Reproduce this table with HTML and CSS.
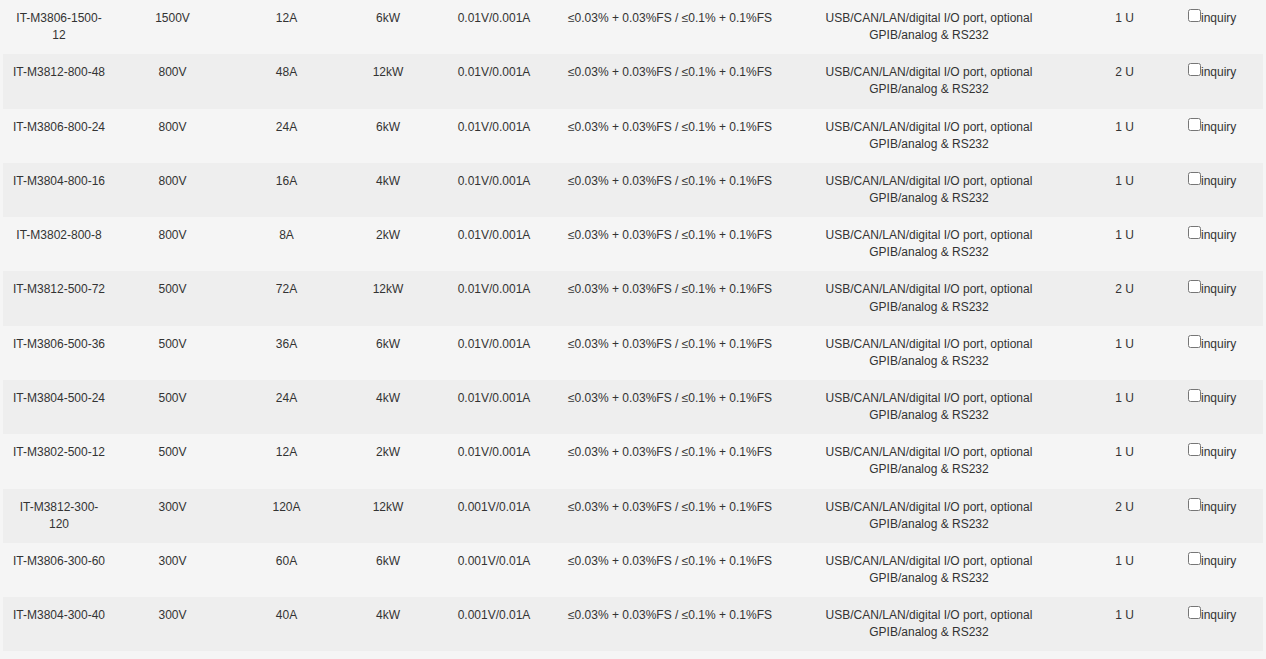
FILE: index.html
```html
<!DOCTYPE html>
<html>
<head>
<meta charset="utf-8">
<link rel="stylesheet" href="styles.css">
</head>
<body>
<table class="spec">
<colgroup>
<col class="c1"><col class="c2"><col class="c3"><col class="c4"><col class="c5"><col class="c6"><col class="c7"><col class="c8"><col class="c9">
</colgroup>
<tbody>
<tr><td>IT-M3806-1500-12</td><td>1500V</td><td>12A</td><td>6kW</td><td>0.01V/0.001A</td><td>≤0.03% + 0.03%FS / ≤0.1% + 0.1%FS</td><td>USB/CAN/LAN/digital I/O port, optional GPIB/analog &amp; RS232</td><td>1 U</td><td class="inq"><input type="checkbox">inquiry</td></tr>
<tr><td>IT-M3812-800-48</td><td>800V</td><td>48A</td><td>12kW</td><td>0.01V/0.001A</td><td>≤0.03% + 0.03%FS / ≤0.1% + 0.1%FS</td><td>USB/CAN/LAN/digital I/O port, optional GPIB/analog &amp; RS232</td><td>2 U</td><td class="inq"><input type="checkbox">inquiry</td></tr>
<tr><td>IT-M3806-800-24</td><td>800V</td><td>24A</td><td>6kW</td><td>0.01V/0.001A</td><td>≤0.03% + 0.03%FS / ≤0.1% + 0.1%FS</td><td>USB/CAN/LAN/digital I/O port, optional GPIB/analog &amp; RS232</td><td>1 U</td><td class="inq"><input type="checkbox">inquiry</td></tr>
<tr><td>IT-M3804-800-16</td><td>800V</td><td>16A</td><td>4kW</td><td>0.01V/0.001A</td><td>≤0.03% + 0.03%FS / ≤0.1% + 0.1%FS</td><td>USB/CAN/LAN/digital I/O port, optional GPIB/analog &amp; RS232</td><td>1 U</td><td class="inq"><input type="checkbox">inquiry</td></tr>
<tr><td>IT-M3802-800-8</td><td>800V</td><td>8A</td><td>2kW</td><td>0.01V/0.001A</td><td>≤0.03% + 0.03%FS / ≤0.1% + 0.1%FS</td><td>USB/CAN/LAN/digital I/O port, optional GPIB/analog &amp; RS232</td><td>1 U</td><td class="inq"><input type="checkbox">inquiry</td></tr>
<tr><td>IT-M3812-500-72</td><td>500V</td><td>72A</td><td>12kW</td><td>0.01V/0.001A</td><td>≤0.03% + 0.03%FS / ≤0.1% + 0.1%FS</td><td>USB/CAN/LAN/digital I/O port, optional GPIB/analog &amp; RS232</td><td>2 U</td><td class="inq"><input type="checkbox">inquiry</td></tr>
<tr><td>IT-M3806-500-36</td><td>500V</td><td>36A</td><td>6kW</td><td>0.01V/0.001A</td><td>≤0.03% + 0.03%FS / ≤0.1% + 0.1%FS</td><td>USB/CAN/LAN/digital I/O port, optional GPIB/analog &amp; RS232</td><td>1 U</td><td class="inq"><input type="checkbox">inquiry</td></tr>
<tr><td>IT-M3804-500-24</td><td>500V</td><td>24A</td><td>4kW</td><td>0.01V/0.001A</td><td>≤0.03% + 0.03%FS / ≤0.1% + 0.1%FS</td><td>USB/CAN/LAN/digital I/O port, optional GPIB/analog &amp; RS232</td><td>1 U</td><td class="inq"><input type="checkbox">inquiry</td></tr>
<tr><td>IT-M3802-500-12</td><td>500V</td><td>12A</td><td>2kW</td><td>0.01V/0.001A</td><td>≤0.03% + 0.03%FS / ≤0.1% + 0.1%FS</td><td>USB/CAN/LAN/digital I/O port, optional GPIB/analog &amp; RS232</td><td>1 U</td><td class="inq"><input type="checkbox">inquiry</td></tr>
<tr><td>IT-M3812-300-120</td><td>300V</td><td>120A</td><td>12kW</td><td>0.001V/0.01A</td><td>≤0.03% + 0.03%FS / ≤0.1% + 0.1%FS</td><td>USB/CAN/LAN/digital I/O port, optional GPIB/analog &amp; RS232</td><td>2 U</td><td class="inq"><input type="checkbox">inquiry</td></tr>
<tr><td>IT-M3806-300-60</td><td>300V</td><td>60A</td><td>6kW</td><td>0.001V/0.01A</td><td>≤0.03% + 0.03%FS / ≤0.1% + 0.1%FS</td><td>USB/CAN/LAN/digital I/O port, optional GPIB/analog &amp; RS232</td><td>1 U</td><td class="inq"><input type="checkbox">inquiry</td></tr>
<tr><td>IT-M3804-300-40</td><td>300V</td><td>40A</td><td>4kW</td><td>0.001V/0.01A</td><td>≤0.03% + 0.03%FS / ≤0.1% + 0.1%FS</td><td>USB/CAN/LAN/digital I/O port, optional GPIB/analog &amp; RS232</td><td>1 U</td><td class="inq"><input type="checkbox">inquiry</td></tr>
</tbody>
</table>
</body>
</html>
```

FILE: styles.css
```css
html, body {
  margin: 0;
  padding: 0;
  background: #f5f5f5;
}
body {
  font-family: "Liberation Sans", Arial, sans-serif;
  font-size: 12px;
  line-height: 1.42857143;
  color: #333;
}
.spec {
  margin: 0 3px;
  width: 1260px;
  table-layout: fixed;
  border-collapse: collapse;
  border-spacing: 0;
}
.c1 { width: 112px; }
.c2 { width: 115px; }
.c3 { width: 113px; }
.c4 { width: 90px; }
.c5 { width: 122px; }
.c6 { width: 230px; }
.c7 { width: 288px; }
.c8 { width: 103px; }
.c9 { width: 87px; }
.spec td {
  padding: 10px 8px 10px;
  text-align: center;
  vertical-align: top;
}
.spec tr:nth-child(even) td {
  background: #eeeeee;
}
.spec td.inq {
  text-align: left;
}
.spec input[type="checkbox"] {
  margin: -1px 0 0 4px;
  width: 13px;
  height: 13px;
  vertical-align: top;
}
```
